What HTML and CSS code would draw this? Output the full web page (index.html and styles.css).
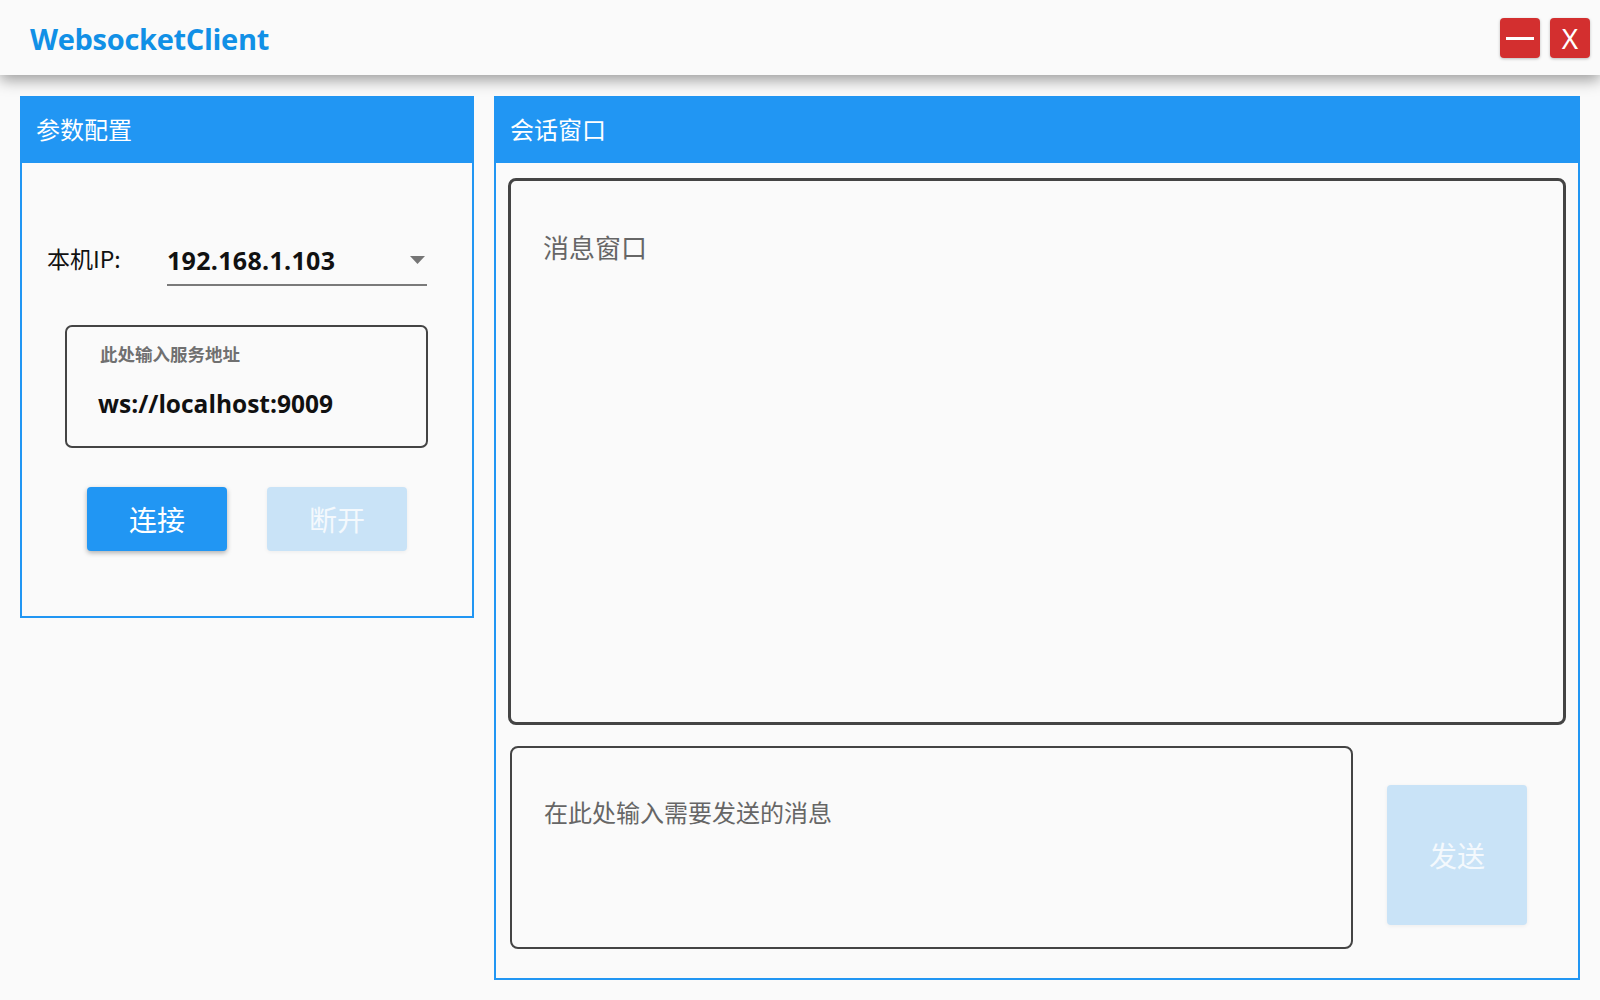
FILE: index.html
```html
<!DOCTYPE html>
<html lang="zh-CN">
<head>
<meta charset="utf-8">
<title>WebsocketClient</title>
<link rel="stylesheet" href="styles.css">
</head>
<body>
<header class="appbar">
  <div class="app-title">WebsocketClient</div>
  <div class="win-btns">
    <button class="win-btn"><span class="minus"></span></button>
    <button class="win-btn close">X</button>
  </div>
</header>
<main class="main">
  <section class="panel panel-left">
    <div class="panel-head">参数配置</div>
    <div class="left-body">
      <div class="ip-row">
        <span class="ip-label">本机IP:</span>
        <div class="select">
          <span class="select-val">192.168.1.103</span>
          <svg class="caret" width="15" height="8" viewBox="0 0 15 8"><path d="M0 0 H15 L7.5 8 Z" fill="#757575"/></svg>
        </div>
      </div>
      <div class="addr-box">
        <div class="addr-label">此处输入服务地址</div>
        <div class="addr-val">ws://localhost:9009</div>
      </div>
      <div class="btn-row">
        <button class="btn btn-primary">连接</button>
        <button class="btn btn-disabled">断开</button>
      </div>
    </div>
  </section>
  <section class="panel panel-right">
    <div class="panel-head">会话窗口</div>
    <div class="right-body">
      <div class="msg-window">消息窗口</div>
      <div class="input-row">
        <div class="msg-input">在此处输入需要发送的消息</div>
        <button class="btn btn-disabled btn-send">发送</button>
      </div>
    </div>
  </section>
</main>
</body>
</html>
```

FILE: styles.css
```css
* { box-sizing: border-box; }
html, body { margin: 0; padding: 0; }
body {
  width: 1600px;
  height: 1000px;
  background: #fafafa;
  font-family: "Noto Sans CJK SC", "Noto Sans", sans-serif;
  overflow: hidden;
  display: flex;
  flex-direction: column;
}
button { font-family: inherit; border: none; padding: 0; cursor: pointer; }

.appbar {
  height: 75px;
  flex: 0 0 75px;
  background: #fafafa;
  box-shadow: 0 5px 14px rgba(0,0,0,0.38);
  display: flex;
  align-items: flex-start;
  justify-content: space-between;
  position: relative;
  z-index: 2;
}
.app-title {
  font-family: "Open Sans", "Noto Sans", sans-serif;
  font-weight: 700;
  font-size: 29px;
  color: #1190e6;
  margin-left: 30px;
  margin-top: 19px;
  line-height: 40px;
  letter-spacing: -0.3px;
}
.win-btns {
  display: flex;
  gap: 10px;
  margin-top: 18px;
  margin-right: 10px;
}
.win-btn {
  width: 40px;
  height: 40px;
  background: #d32f2f;
  border-radius: 4px;
  color: #fff;
  font-family: "Noto Sans", sans-serif;
  font-size: 28px;
  line-height: 40px;
  display: flex;
  align-items: center;
  justify-content: center;
  box-shadow: 0 1px 3px rgba(0,0,0,0.25);
}
.minus {
  width: 28px;
  height: 3px;
  background: #fff;
  display: block;
}

.main {
  flex: 1;
  display: flex;
  gap: 20px;
  padding: 21px 20px 20px 20px;
  align-items: flex-start;
}
.panel {
  border: 2px solid #2196f3;
  background: #fafafa;
  display: flex;
  flex-direction: column;
}
.panel-left {
  width: 454px;
  height: 522px;
}
.panel-right {
  flex: 1;
  align-self: stretch;
}
.panel-head {
  background: #2196f3;
  color: #fff;
  font-size: 24px;
  line-height: 62px;
  padding-left: 16px;
  margin: -2px -2px 0 -2px;
  padding-top: 2px;
  height: 67px;
  flex: 0 0 67px;
}

.left-body {
  display: flex;
  flex-direction: column;
}
.ip-row {
  display: flex;
  align-items: flex-end;
  margin-top: 74px;
  margin-left: 25px;
  height: 49px;
}
.ip-label {
  width: 120px;
  font-size: 23px;
  color: #111;
  line-height: 30px;
  margin-bottom: 13px;
}
.select {
  width: 260px;
  height: 49px;
  border-bottom: 2px solid #7a7a7a;
  display: flex;
  align-items: center;
  justify-content: space-between;
  padding-right: 2px;
}
.select-val {
  font-family: "Open Sans", "Noto Sans", sans-serif;
  font-weight: 700;
  font-size: 25px;
  letter-spacing: 0.3px;
  color: #111;
  margin-top: -2px;
}
.caret { margin-bottom: 2px; }

.addr-box {
  margin-top: 39px;
  margin-left: 43px;
  width: 363px;
  height: 123px;
  border: 2px solid #444;
  border-radius: 7px;
  padding-left: 33px;
}
.addr-label {
  font-size: 17.5px;
  font-weight: 700;
  color: #707070;
  margin-top: 15px;
  line-height: 24px;
}
.addr-val {
  font-family: "Open Sans", "Noto Sans", sans-serif;
  font-weight: 700;
  font-size: 24.5px;
  color: #111;
  margin-top: 22px;
  margin-left: -2px;
  line-height: 32px;
}
.btn-row {
  display: flex;
  gap: 40px;
  margin-top: 39px;
  margin-left: 65px;
}
.btn {
  width: 140px;
  height: 64px;
  border-radius: 4px;
  color: #fff;
  font-size: 28px;
}
.btn-primary {
  background: #2196f3;
  box-shadow: 0 2px 5px rgba(0,0,0,0.3);
}
.btn-disabled {
  background: #c9e3f7;
  color: #f4f9fd;
  box-shadow: 0 1px 4px rgba(0,0,0,0.06);
}

.right-body {
  flex: 1;
  display: flex;
  flex-direction: column;
  padding: 15px 12px 29px 12px;
}
.msg-window {
  flex: 1;
  border: 3px solid #444;
  border-radius: 8px;
  padding: 49px 0 0 32px;
  font-size: 26px;
  color: #666;
  line-height: 34px;
}
.input-row {
  display: flex;
  align-items: flex-start;
  margin-top: 21px;
  height: 203px;
}
.msg-input {
  width: 843px;
  height: 203px;
  margin-left: 2px;
  border: 2px solid #444;
  border-radius: 8px;
  padding: 47px 0 0 32px;
  font-size: 24px;
  color: #666;
  line-height: 34px;
}
.btn-send {
  width: 140px;
  height: 140px;
  margin-left: 34px;
  margin-top: 39px;
}
```
